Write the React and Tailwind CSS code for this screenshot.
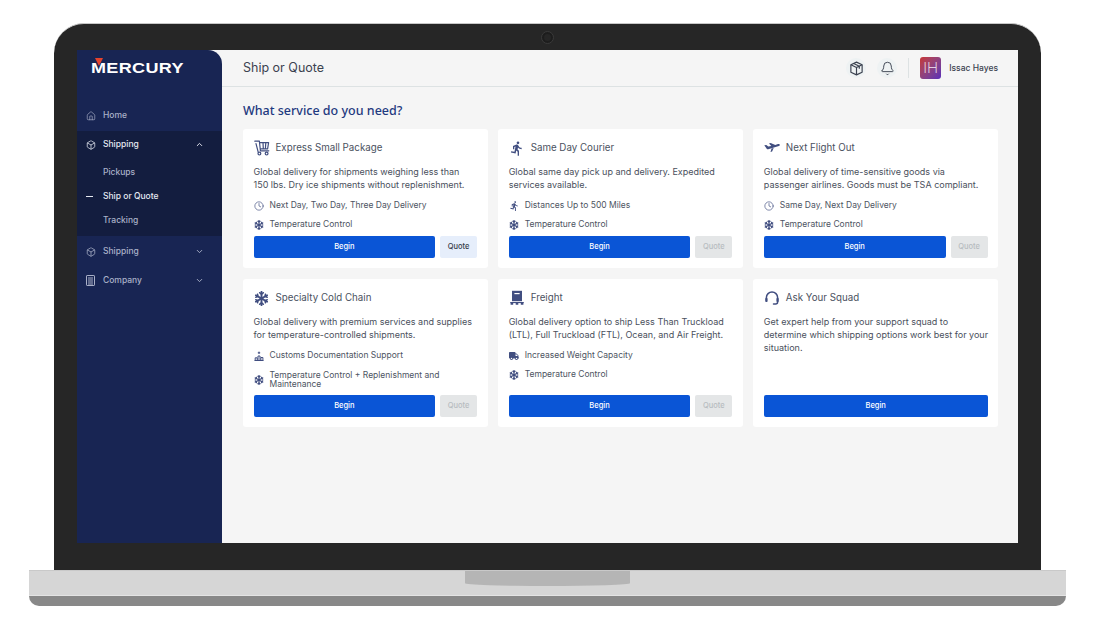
import React from "react";
import { ChevronUp, ChevronDown, Clock, Bell, Box, House } from "lucide-react";
import { FaSnowflake, FaTruck } from "react-icons/fa";
import { MdDirectionsRun } from "react-icons/md";

const ICON = "#414e80";

function Cart({ size = 16 }) {
  return (
    <svg width={size} height={size} viewBox="0 0 16 16" fill="none" stroke={ICON} strokeWidth="1.2" strokeLinejoin="round" strokeLinecap="round">
      <path d="M.8 1.2h4.6l1 9.6h8.4" />
      <path d="M2 3.6l2.2 8.6" />
      <path d="M6 2.6h8.6l-1 6.2H6.6M9 2.6l.3 6.2M11.8 2.6l-.4 6.2" />
      <circle cx="5.4" cy="13.6" r="1.4" />
      <circle cx="12.6" cy="13.6" r="1.4" />
    </svg>
  );
}
function PlaneIcon({ size = 16 }) {
  return (
    <svg width={size} height={size} viewBox="0 0 16 16" fill={ICON}>
      <path d="M.3 5.2l2 -.3 2 1.7 3 -.7L5 3.4l1.7 -.5 4.6 2L14 4.1c.8-.2 1.7.2 1.9.7.1.5-.3.9-1 1.2L4.2 9.3c-.5.1-1 0-1.3-.3L.3 5.2z" />
      <path d="M7.5 8.6l2.2-.7-1.6 3.6-1.6.5 1-3.4z" />
    </svg>
  );
}
function FreightIcon({ size = 16 }) {
  return (
    <svg width={size} height={size} viewBox="0 0 16 16" fill={ICON}>
      <path d="M3 .8h10v10.4H3z" />
      <path d="M5.4 3h5.2v1.2H5.4z" fill="#fff" />
      <path d="M1.2 12h13.6v1.1H1.2z" />
      <path d="M1.6 13.1h2.6v1.7H1.6zM6.7 13.1h2.6v1.7H6.7zM11.8 13.1h2.6v1.7h-2.6z" />
    </svg>
  );
}
function HeadsetIcon({ size = 16 }) {
  return (
    <svg width={size} height={size} viewBox="0 0 16 16" fill="none" stroke={ICON} strokeWidth="1.5" strokeLinecap="round">
      <path d="M2.4 9V7.6a5.6 5.6 0 0 1 11.2 0V9" />
      <path d="M13.6 11.5v.6a2 2 0 0 1-2 2H9.5" />
      <rect x="1.2" y="8" width="2.4" height="4" rx="1" fill={ICON} stroke="none" />
      <rect x="12.4" y="8" width="2.4" height="4" rx="1" fill={ICON} stroke="none" />
    </svg>
  );
}
function CustomsIcon({ size = 10 }) {
  return (
    <svg width={size} height={size} viewBox="0 0 10 10" fill="none" stroke={ICON} strokeWidth="1">
      <path d="M.5 9.5h9M1.2 9.5V6.8h2v2.7M4 9.5V5h2v4.5M6.9 9.5V6.5h2v3" />
      <path d="M5 .6v2.4M3.8 1.8H6.2" />
    </svg>
  );
}
function BuildingIcon() {
  return (
    <svg width="9" height="11" viewBox="0 0 9 11" fill="none" stroke="#aab1c8" strokeWidth="1">
      <rect x=".5" y=".5" width="8" height="10" rx=".6" />
      <path d="M2 3h5M2 5h5M2 7h5M2 9h5" />
    </svg>
  );
}
function HexBox({ size = 15, color = "#3b4250" }) {
  return (
    <svg width={size} height={size} viewBox="0 0 16 16" fill="none" stroke={color} strokeWidth="1.25" strokeLinejoin="round">
      <path d="M8 1.2l6 2.8v8L8 14.8 2 12V4z" />
      <path d="M2 4l6 3 6-3M8 7v7.8M5 2.6l6 3v2.6" />
    </svg>
  );
}

const snow = <FaSnowflake size={10} color={ICON} />;
const clock = <Clock size={10} color={ICON} strokeWidth={1.6} />;

const cards = [
  {
    icon: <Cart />, title: "Express Small Package",
    desc: ["Global delivery for shipments weighing less than", "150 lbs. Dry ice shipments without replenishment."],
    f: [[clock, "Next Day, Two Day, Three Day Delivery"], [snow, "Temperature Control"]], quote: true,
  },
  {
    icon: <MdDirectionsRun size={19} color={ICON} />, title: "Same Day Courier",
    desc: ["Global same day pick up and delivery. Expedited", "services available."],
    f: [[<MdDirectionsRun size={12} color={ICON} />, "Distances Up to 500 Miles"], [snow, "Temperature Control"]],
  },
  {
    icon: <PlaneIcon />, title: "Next Flight Out",
    desc: ["Global delivery of time-sensitive goods via", "passenger airlines. Goods must be TSA compliant."],
    f: [[clock, "Same Day, Next Day Delivery"], [snow, "Temperature Control"]],
  },
  {
    icon: <FaSnowflake size={15} color={ICON} />, title: "Specialty Cold Chain",
    desc: ["Global delivery with premium services and supplies", "for temperature-controlled shipments."],
    f: [[<CustomsIcon />, "Customs Documentation Support"], [snow, <>Temperature Control + Replenishment and<br />Maintenance</>]],
    tall: true,
  },
  {
    icon: <FreightIcon />, title: "Freight",
    desc: ["Global delivery option to ship Less Than Truckload", "(LTL), Full Truckload (FTL), Ocean, and Air Freight."],
    f: [[<FaTruck size={10} color={ICON} />, "Increased Weight Capacity"], [snow, "Temperature Control"]],
  },
  {
    icon: <HeadsetIcon />, title: "Ask Your Squad",
    desc: ["Get expert help from your support squad to", "determine which shipping options work best for your", "situation."],
    f: [], full: true,
  },
];

function Card({ c }) {
  return (
    <div className="bg-white rounded-[3px] px-[10.5px] pt-[11px] pb-[10px] flex flex-col">
      <div className="flex items-center gap-[6px] h-[16px]">
        <span className="w-[16px] h-[16px] flex items-center justify-center shrink-0">{c.icon}</span>
        <span className="text-[9.75px] font-normal text-[#4a5160]">{c.title}</span>
      </div>
      <div className="mt-[9px] text-[9px] leading-[13px] text-[#4a505c]">
        {c.desc.map((d, i) => <div key={i} className="whitespace-nowrap">{d}</div>)}
      </div>
      {c.f.length > 0 && (
        <div className="mt-[9px] flex flex-col gap-[6.5px]">
          {c.f.map(([ic, t], i) => (
            <div key={i} className={"flex items-center gap-[5px] min-h-[12px] " + (c.tall && i === 1 ? "pt-[2px]" : "")}>
              <span className="w-[11px] h-[12px] flex items-center justify-center shrink-0">{ic}</span>
              <span className="text-[8.5px] leading-[9.5px] text-[#4d5462] whitespace-nowrap">{t}</span>
            </div>
          ))}
        </div>
      )}
      <div className="mt-auto flex gap-[5px]">
        <button className="flex-1 h-[22px] rounded-[2px] bg-[#0a55d6] text-white text-[7.5px] font-medium">Begin</button>
        {!c.full && (
          <button className={"w-[37px] h-[22px] rounded-[2px] text-[7.5px] font-medium " + (c.quote ? "bg-[#e6eefb] text-[#363d4a]" : "bg-[#e4e6e7] text-[#b7bcc0]")}>Quote</button>
        )}
      </div>
    </div>
  );
}

function NavRow({ icon, label, open, active, chevron, h = "h-[29px]" }) {
  return (
    <div className={"flex items-center pl-[8px] pr-[18px] text-[8.5px] font-medium " + h + " " + (active ? "text-[#e6e9f2]" : "text-[#aab1c8]")}>
      <span className="w-[11px] flex justify-center mr-[7px]">{icon}</span>
      <span className="flex-1">{label}</span>
      {chevron && (open ? <ChevronUp size={9} strokeWidth={2.5} /> : <ChevronDown size={9} strokeWidth={2.5} />)}
    </div>
  );
}

export default function App() {
  return (
    <div className="w-[1100px] h-[624px] bg-white overflow-hidden pt-[23px] pl-[29px] font-['Inter',sans-serif]">
      <div className="ml-[25px] w-[987px] h-[547px] bg-[#262626] rounded-t-[30px] flex flex-col items-center border-t border-[#c8c8c8]">
        <div className="h-[26px] flex items-center justify-center">
          <div className="w-[13px] h-[13px] rounded-full bg-[#1d1d1d] border border-[#3a3a3a] flex items-center justify-center">
            <div className="w-[7px] h-[7px] rounded-full bg-[#262626]" />
          </div>
        </div>
        <div className="w-[941px] h-[493px] bg-[#f5f5f5] flex">
          <aside className="w-[145px] h-full bg-[#182553] rounded-tr-[14px] shrink-0">
            <div className="h-[50px] pl-[14px] pt-[9px]">
              <div className="relative w-[94px] h-[14px]">
                <span className="block pt-[1px] text-white text-[15px] leading-[16px] font-bold tracking-[0.3px] origin-left scale-x-[1.2] font-['Liberation_Sans',sans-serif]">MERCURY</span>
                <span className="absolute left-[4px] top-[-1px] w-0 h-0 border-l-[4px] border-r-[4px] border-t-[8px] border-l-transparent border-r-transparent border-t-[#e5432d]" />
              </div>
            </div>
            <div className="pt-[1px]">
              <NavRow icon={<House size={10} strokeWidth={1.6} />} label="Home" />
            </div>
            <div className="bg-[#131d3f] h-[105px] mt-[1px]">
              <NavRow h="h-[27px]" active open chevron icon={<Box size={10} strokeWidth={1.8} />} label="Shipping" />
              <div className="pt-[2px] text-[8.5px] font-medium text-[#aab1c8]">
                <div className="h-[24px] pl-[26px] flex items-center">Pickups</div>
                <div className="h-[24px] flex items-center text-[#e6e9f2]">
                  <span className="w-[7px] h-[1px] bg-[#e6e9f2] ml-[9px] mr-[10px]" />
                  Ship or Quote
                </div>
                <div className="h-[24px] pl-[26px] flex items-center">Tracking</div>
              </div>
            </div>
            <div className="pt-[1px]">
              <NavRow chevron icon={<Box size={10} strokeWidth={1.8} />} label="Shipping" />
              <NavRow chevron icon={<BuildingIcon />} label="Company" />
            </div>
          </aside>
          <main className="flex-1 flex flex-col min-w-0">
            <header className="h-[37px] border-b border-[#dde2e3] flex items-center pl-[21px] pr-[20px]">
              <h1 className="flex-1 text-[12.5px] font-normal text-[#3b4250]">Ship or Quote</h1>
              <span className="w-[20px] h-[20px] rounded-full bg-[#eef2f3] flex items-center justify-center"><HexBox /></span>
              <span className="w-[20px] h-[20px] ml-[11px] rounded-full bg-[#eef2f3] flex items-center justify-center"><Bell size={15} strokeWidth={1.5} color="#3b4250" /></span>
              <span className="w-[1px] h-[20px] bg-[#dde2e3] ml-[11px]" />
              <span className="w-[21px] h-[22px] ml-[11px] rounded-[3px] bg-gradient-to-br from-[#c8342f] to-[#5b2ab8] text-white/90 text-[15px] font-extralight flex items-center justify-center">IH</span>
              <span className="ml-[8px] text-[8.5px] font-medium text-[#3b4250]">Issac Hayes</span>
            </header>
            <div className="pl-[21px] pr-[20px] pt-[15px]">
              <h2 className="text-[12.5px] leading-[18px] font-medium text-[#1f3a80] font-['Noto_Sans',sans-serif]">What service do you need?</h2>
              <div className="mt-[9px] grid grid-cols-3 grid-rows-[139px_148px] gap-x-[10.5px] gap-y-[11px]">
                {cards.map((c) => <Card key={c.title} c={c} />)}
              </div>
            </div>
          </main>
        </div>
      </div>
      <div className="w-[1037px] h-[26px] bg-[#d6d6d6] border-t border-[#c9c9c9] border-b border-b-[#e4e4e4] flex justify-center">
        <div className="w-[165px] h-[15px] bg-[#b5b5b5] rounded-b-[50%_18%]" />
      </div>
      <div className="w-[1037px] h-[10px] bg-[#888888] rounded-b-[10px]" />
    </div>
  );
}
